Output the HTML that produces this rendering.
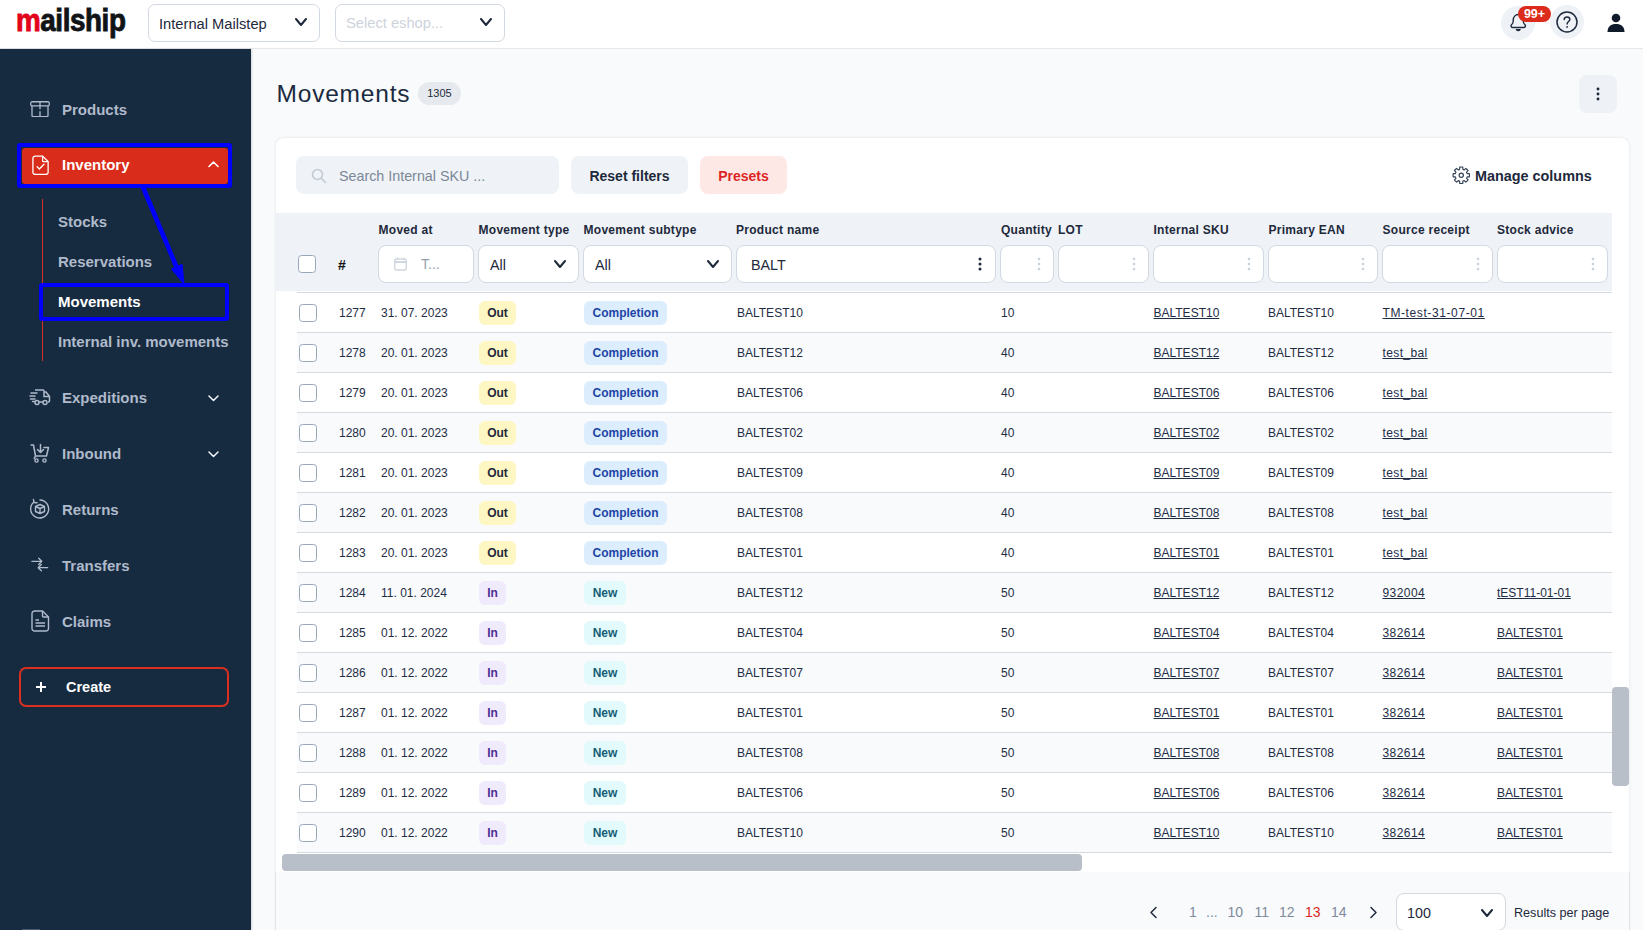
<!DOCTYPE html>
<html><head><meta charset="utf-8"><title>Movements</title>
<style>
*{box-sizing:border-box;margin:0;padding:0}
html,body{width:1643px;height:930px;overflow:hidden;background:#f8fafc;font-family:"Liberation Sans", sans-serif;color:#1e293b}
.a{position:absolute}
.t{position:absolute;white-space:nowrap}
.chk{position:absolute;width:18px;height:18px;border:1.2px solid #98a8ba;border-radius:3.5px;background:#fff}
.inp{position:absolute;height:38px;top:245px;background:#fff;border:1px solid #d3d9e1;border-radius:8px}
.hl{position:absolute;top:221px;font-size:12px;font-weight:bold;letter-spacing:0.28px;line-height:18px;white-space:nowrap;color:#1e293b}
.row{position:absolute;left:297px;width:1315px;height:40px;border-bottom:1px solid #d6dbe2}
.row.g{background:#f8fafc}
.c{position:absolute;top:0;line-height:40px;font-size:12px;white-space:nowrap;color:#1e2d45}
.lk{text-decoration:underline;text-underline-offset:1.2px;color:#1e2d45}
.bd{position:absolute;top:8px;height:24px;line-height:24px;border-radius:6px;font-size:12px;font-weight:bold;text-align:center}
.dots{position:absolute;top:11px;width:4px;height:16px}
.dots i{display:block;width:3px;height:3px;border-radius:50%;background:#cbd2db;margin:0 0 2.5px 0}
.nav{position:absolute;left:0;font-size:15px;font-weight:bold;color:#afbacb;line-height:20px;white-space:nowrap}
</style></head>
<body>
<div class="a" style="left:0;top:0;width:1643px;height:49px;background:#fff;border-bottom:1px solid #e5e7eb"></div><div class="t" style="left:16px;top:0px;font-size:32px;font-weight:bold;line-height:40px;letter-spacing:-0.5px;transform:scaleX(0.87);transform-origin:0 0;-webkit-text-stroke:0.9px currentColor;color:#111417"><span style="color:#e2001a;-webkit-text-stroke-color:#e2001a">m</span>ailship</div><div class="a" style="left:148px;top:4px;width:172px;height:38px;border:1px solid #d3d9e1;border-radius:7px;background:#fff"></div><div class="t" style="left:159px;top:14px;font-size:14.7px;line-height:20px;color:#1e293b">Internal Mailstep</div><svg class="a" style="left:295px;top:18px" width="12" height="9" viewBox="0 0 12 9"><path d="M1 1 L6.0 7 L11 1" fill="none" stroke="#1e293b" stroke-width="2" stroke-linecap="round" stroke-linejoin="round"/></svg><div class="a" style="left:335px;top:4px;width:170px;height:38px;border:1px solid #d3d9e1;border-radius:7px;background:#fff"></div><div class="t" style="left:346px;top:13px;font-size:14.7px;line-height:20px;color:#cdd3db">Select eshop...</div><svg class="a" style="left:480px;top:18px" width="12" height="9" viewBox="0 0 12 9"><path d="M1 1 L6.0 7 L11 1" fill="none" stroke="#1e293b" stroke-width="2" stroke-linecap="round" stroke-linejoin="round"/></svg><div class="a" style="left:1501px;top:6px;width:34px;height:34px;border-radius:50%;background:#eef2f6"></div><svg class="a" style="left:1508px;top:12px" width="20" height="22" viewBox="0 0 20 22"><path d="M4.5 15.5 H16 C17.6 15.5 18 13.2 16.6 12.3 C15.6 11.6 15.3 10.5 15.3 9 V8 C15.3 5 13 2.5 10.25 2.5 C7.5 2.5 5.2 5 5.2 8 V9 C5.2 10.5 4.9 11.6 3.9 12.3 C2.5 13.2 2.9 15.5 4.5 15.5 Z" fill="none" stroke="#1e293b" stroke-width="1.4" stroke-linejoin="round"/><path d="M8.3 17.6 Q10.25 19.8 12.2 17.6 Z" fill="#1e293b" stroke="#1e293b" stroke-width="1.2" stroke-linejoin="round"/></svg><div class="t" style="left:1518px;top:6px;width:33px;height:16px;border-radius:8px;background:#dc2b1c;color:#fff;font-size:12.5px;font-weight:bold;line-height:16px;text-align:center">99+</div><div class="a" style="left:1550px;top:5px;width:34px;height:34px;border-radius:50%;background:#eef2f6"></div><svg class="a" style="left:1556px;top:11px" width="22" height="22" viewBox="0 0 22 22"><circle cx="11" cy="11" r="10" fill="none" stroke="#1e293b" stroke-width="1.5"/><path d="M8.2 8.6 C8.2 6.9 9.5 6 11 6 C12.6 6 13.8 7 13.8 8.5 C13.8 10.4 11.1 10.6 11.1 12.9" fill="none" stroke="#1e293b" stroke-width="1.5" stroke-linecap="round"/><circle cx="11.1" cy="15.9" r="0.9" fill="#1e293b"/></svg><svg class="a" style="left:1606px;top:13px" width="20" height="20" viewBox="0 0 20 20"><circle cx="10" cy="5" r="4.3" fill="#0f1a2a"/><path d="M1.5 19 C1.5 13.5 5 11 10 11 C15 11 18.5 13.5 18.5 19 Z" fill="#0f1a2a"/></svg><div class="a" style="left:0;top:49px;width:251px;height:881px;background:#172b40;box-shadow:1px 0 2px rgba(0,0,0,0.15)"></div><div class="nav" style="left:62px;top:100px">Products</div><svg class="a" style="left:29.5px;top:100.5px" width="20" height="16.5" viewBox="0 0 20 16.5"><rect x="0.75" y="0.75" width="18.5" height="4.2" rx="1.4" fill="none" stroke="#afbacb" stroke-width="1.3"/><path d="M2 4.95 V14.6 a1.1 1.1 0 0 0 1.1 1.1 H16.9 a1.1 1.1 0 0 0 1.1 -1.1 V4.95" fill="none" stroke="#afbacb" stroke-width="1.3"/><path d="M10 0.75 V8.3 M10 10.3 V15.7" stroke="#afbacb" stroke-width="1.3"/></svg><div class="a" style="left:17px;top:143px;width:214.5px;height:45px;border:4.5px solid #0000ff;border-radius:3px"></div><div class="a" style="left:21.5px;top:147.5px;width:206px;height:36px;background:#da2c1b;border-radius:3px"></div><svg class="a" style="left:31.5px;top:154.5px" width="17.5" height="20.5" viewBox="0 0 19 22"><path d="M3 1 H11.5 L17.5 7 V18.5 a2.5 2.5 0 0 1 -2.5 2.5 H3.5 a2.5 2.5 0 0 1 -2.5 -2.5 V3.5 A2.5 2.5 0 0 1 3.5 1 Z" fill="none" stroke="#fff" stroke-width="1.4"/><path d="M11.5 1 V6 a1 1 0 0 0 1 1 H17.5" fill="none" stroke="#fff" stroke-width="1.4"/><path d="M5.5 12.5 L8 15 L13 10" fill="none" stroke="#fff" stroke-width="1.5" stroke-linecap="round" stroke-linejoin="round"/></svg><div class="nav" style="left:62px;top:155px;color:#fff">Inventory</div><svg class="a" style="left:208px;top:160px" width="11" height="8" viewBox="0 0 11 8"><path d="M1 6.5 L5.5 2 L10 6.5" fill="none" stroke="#fff" stroke-width="1.6" stroke-linecap="round" stroke-linejoin="round"/></svg><div class="a" style="left:41.8px;top:199px;width:1.4px;height:162px;background:#d8301f"></div><div class="nav" style="left:58px;top:212px">Stocks</div><div class="nav" style="left:58px;top:252px">Reservations</div><div class="a" style="left:39px;top:283px;width:190px;height:38px;border:4.8px solid #0000ff;border-radius:3px;background:#172b40"></div><div class="nav" style="left:58px;top:292px;color:#fff">Movements</div><div class="nav" style="left:58px;top:332px">Internal inv. movements</div><svg class="a" style="left:0;top:0" width="251" height="330" viewBox="0 0 251 330"><path d="M142.5 186 L176.5 267" stroke="#0000ff" stroke-width="4.6"/><path d="M184 284 L171.5 269 L182 264.3 Z" fill="#0000ff" stroke="#0000ff" stroke-width="1" stroke-linejoin="miter"/></svg><div class="nav" style="left:62px;top:388px">Expeditions</div><svg class="a" style="left:29px;top:388px" width="22" height="18" viewBox="0 0 22 18"><path d="M6 2 H14 a1 1 0 0 1 1 1 V4 H17 L20.5 8.5 V13 a1 1 0 0 1 -1 1 H19" fill="none" stroke="#afbacb" stroke-width="1.5" stroke-linejoin="round"/><path d="M15 4 V8.5 H20.5" fill="none" stroke="#afbacb" stroke-width="1.5"/><path d="M2 5 H8 M1 8 H6 M1.5 11 H6 M3.5 13.5 H6 M10.5 14 H13.5" stroke="#afbacb" stroke-width="1.5" stroke-linecap="round"/><circle cx="8" cy="14.5" r="2" fill="none" stroke="#afbacb" stroke-width="1.5"/><circle cx="16" cy="14.5" r="2" fill="none" stroke="#afbacb" stroke-width="1.5"/></svg><svg class="a" style="left:208px;top:394.5px" width="11" height="7.5" viewBox="0 0 11 7.5"><path d="M1 1 L5.5 5.5 L10 1" fill="none" stroke="#f1f4f8" stroke-width="1.5" stroke-linecap="round" stroke-linejoin="round"/></svg><div class="nav" style="left:62px;top:444px">Inbound</div><svg class="a" style="left:30px;top:443px" width="20" height="20" viewBox="0 0 20 20"><path d="M1 2 H3.5 L5.5 13 H16.5 L18.5 4.5 H14" fill="none" stroke="#afbacb" stroke-width="1.5" stroke-linejoin="round" stroke-linecap="round"/><path d="M10.5 1.5 V9 M7.5 6.5 L10.5 9.5 L13.5 6.5" fill="none" stroke="#afbacb" stroke-width="1.5" stroke-linecap="round" stroke-linejoin="round"/><path d="M5.5 13 L4 16" stroke="#afbacb" stroke-width="1.5"/><circle cx="6.5" cy="17.5" r="1.6" fill="none" stroke="#afbacb" stroke-width="1.4"/><circle cx="14.5" cy="17.5" r="1.6" fill="none" stroke="#afbacb" stroke-width="1.4"/></svg><svg class="a" style="left:208px;top:450.5px" width="11" height="7.5" viewBox="0 0 11 7.5"><path d="M1 1 L5.5 5.5 L10 1" fill="none" stroke="#f1f4f8" stroke-width="1.5" stroke-linecap="round" stroke-linejoin="round"/></svg><div class="nav" style="left:62px;top:500px">Returns</div><svg class="a" style="left:29px;top:498px" width="22" height="22" viewBox="0 0 22 22"><path d="M5 4 A9 9 0 1 0 11 2" fill="none" stroke="#afbacb" stroke-width="1.4" stroke-linecap="round"/><path d="M4.5 1.5 L4.8 4.6 L8 4.8" fill="none" stroke="#afbacb" stroke-width="1.4" stroke-linecap="round" stroke-linejoin="round"/><path d="M11 6.5 L15.5 8.5 V13.5 L11 15.5 L6.5 13.5 V8.5 Z M6.5 8.5 L11 10.5 L15.5 8.5 M11 10.5 V15.5" fill="none" stroke="#afbacb" stroke-width="1.4" stroke-linejoin="round"/></svg><div class="nav" style="left:62px;top:556px">Transfers</div><svg class="a" style="left:30.5px;top:557px" width="18" height="15" viewBox="0 0 20 16"><path d="M1 4.5 H12 M8.5 1 L12 4.5 L8.5 8" fill="none" stroke="#afbacb" stroke-width="1.5" stroke-linecap="round" stroke-linejoin="round"/><path d="M18.5 11.5 H8 M11.5 8 L8 11.5 L11.5 15" fill="none" stroke="#afbacb" stroke-width="1.5" stroke-linecap="round" stroke-linejoin="round"/></svg><div class="nav" style="left:62px;top:612px">Claims</div><svg class="a" style="left:31px;top:610px" width="19" height="22" viewBox="0 0 19 22"><path d="M3 1 H11.5 L17.5 7 V18.5 a2.5 2.5 0 0 1 -2.5 2.5 H3.5 a2.5 2.5 0 0 1 -2.5 -2.5 V3.5 A2.5 2.5 0 0 1 3.5 1 Z" fill="none" stroke="#afbacb" stroke-width="1.4"/><path d="M11.5 1 V6 a1 1 0 0 0 1 1 H17.5" fill="none" stroke="#afbacb" stroke-width="1.4"/><path d="M4.5 10 H8 M4.5 13 H14 M4.5 16 H14" stroke="#afbacb" stroke-width="1.4"/></svg><div class="a" style="left:19px;top:667px;width:210px;height:40px;border:2px solid #dc2f1f;border-radius:7px"></div><svg class="a" style="left:35px;top:681px" width="12" height="12" viewBox="0 0 12 12"><path d="M6 1 V11 M1 6 H11" stroke="#fff" stroke-width="2"/></svg><div class="nav" style="left:66px;top:677px;color:#fff;font-size:14.5px">Create</div><div class="a" style="left:22px;top:929px;width:18px;height:2px;border-radius:1px 1px 0 0;background:#4b5872"></div><div class="t" style="left:276.5px;top:79.3px;font-size:24.5px;letter-spacing:0.8px;line-height:30px;color:#1b2a40">Movements</div><div class="t" style="left:418px;top:82px;width:43px;height:23px;border-radius:12px;background:#e6e9ee;font-size:11px;line-height:23px;text-align:center;color:#1e293b">1305</div><div class="a" style="left:1579px;top:75px;width:38px;height:38px;border-radius:8px;background:#eef2f6"></div><svg class="a" style="left:1595px;top:86px" width="6" height="16" viewBox="0 0 6 16"><circle cx="3" cy="3" r="1.45" fill="#1e293b"/><circle cx="3" cy="8" r="1.45" fill="#1e293b"/><circle cx="3" cy="13" r="1.45" fill="#1e293b"/></svg><div class="a" style="left:276px;top:138px;width:1353px;height:800px;background:#fff;border-radius:8px;box-shadow:0 0 3px rgba(15,23,42,0.11)"></div><div class="a" style="left:276px;top:872px;width:1353px;height:60px;background:#f8fafc;box-shadow:-1px 0 0 rgba(15,23,42,0.06), 1px 0 0 rgba(15,23,42,0.06)"></div><div class="a" style="left:296px;top:156px;width:263px;height:38px;border-radius:8px;background:#eff3f8"></div><svg class="a" style="left:311px;top:168px" width="16" height="16" viewBox="0 0 16 16"><circle cx="6.5" cy="6.5" r="5" fill="none" stroke="#c0c8d2" stroke-width="1.5"/><path d="M10.3 10.3 L14.5 14.5" stroke="#c0c8d2" stroke-width="1.5" stroke-linecap="round"/></svg><div class="t" style="left:339px;top:166px;font-size:14.3px;line-height:20px;color:#7b8796">Search Internal SKU ...</div><div class="t" style="left:571px;top:156px;width:117px;height:38px;border-radius:8px;background:#eff3f8;font-size:14px;font-weight:bold;line-height:40px;text-align:center;color:#1e293b">Reset filters</div><div class="t" style="left:700px;top:156px;width:87px;height:38px;border-radius:8px;background:#fde8e5;font-size:14px;font-weight:bold;line-height:40px;text-align:center;color:#dc2626">Presets</div><svg class="a" style="left:1452px;top:166px" width="18.5" height="18.5" viewBox="0 0 20 20"><path d="M16.38 8.29 L18.74 8.30 A8.9 8.9 0 0 1 18.74 11.70 L16.38 11.71 A6.6 6.6 0 0 1 15.72 13.30 L17.38 14.98 A8.9 8.9 0 0 1 14.98 17.38 L13.30 15.72 A6.6 6.6 0 0 1 11.71 16.38 L11.70 18.74 A8.9 8.9 0 0 1 8.30 18.74 L8.29 16.38 A6.6 6.6 0 0 1 6.70 15.72 L5.02 17.38 A8.9 8.9 0 0 1 2.62 14.98 L4.28 13.30 A6.6 6.6 0 0 1 3.62 11.71 L1.26 11.70 A8.9 8.9 0 0 1 1.26 8.30 L3.62 8.29 A6.6 6.6 0 0 1 4.28 6.70 L2.62 5.02 A8.9 8.9 0 0 1 5.02 2.62 L6.70 4.28 A6.6 6.6 0 0 1 8.29 3.62 L8.30 1.26 A8.9 8.9 0 0 1 11.70 1.26 L11.71 3.62 A6.6 6.6 0 0 1 13.30 4.28 L14.98 2.62 A8.9 8.9 0 0 1 17.38 5.02 L15.72 6.70 A6.6 6.6 0 0 1 16.38 8.29 Z" fill="none" stroke="#334155" stroke-width="1.25" stroke-linejoin="round"/><circle cx="10" cy="10" r="2.3" fill="none" stroke="#334155" stroke-width="1.3"/></svg><div class="t" style="left:1475px;top:166px;font-size:14.4px;font-weight:bold;line-height:20px;color:#1e293b">Manage columns</div><div class="a" style="left:276px;top:213px;width:1336px;height:78px;background:#eff3f8"></div><div class="a" style="left:297px;top:292px;width:1314.5px;height:1px;background:#d3d9e0"></div><div class="chk" style="left:298px;top:255px"></div><div class="t" style="left:338px;top:255px;font-size:14px;font-weight:bold;line-height:20px;color:#111">#</div><div class="hl" style="left:378.5px">Moved at</div><div class="hl" style="left:478.5px">Movement type</div><div class="hl" style="left:583.5px">Movement subtype</div><div class="hl" style="left:736px">Product name</div><div class="hl" style="left:1001px">Quantity</div><div class="hl" style="left:1058px">LOT</div><div class="hl" style="left:1153.5px">Internal SKU</div><div class="hl" style="left:1268.5px">Primary EAN</div><div class="hl" style="left:1382.5px">Source receipt</div><div class="hl" style="left:1497px">Stock advice</div><div class="inp" style="left:378px;width:96px"></div><div class="inp" style="left:478px;width:101px"></div><div class="inp" style="left:583px;width:149px"></div><div class="inp" style="left:736px;width:260px"></div><div class="inp" style="left:1000px;width:54px"></div><div class="inp" style="left:1058px;width:91px"></div><div class="inp" style="left:1153px;width:111px"></div><div class="inp" style="left:1268px;width:110px"></div><div class="inp" style="left:1382px;width:111px"></div><div class="inp" style="left:1497px;width:111px"></div><svg class="a" style="left:394px;top:257px" width="13" height="14" viewBox="0 0 13 14"><rect x="0.75" y="2" width="11.5" height="11" rx="1.5" fill="none" stroke="#cfd6de" stroke-width="1.4"/><path d="M0.75 5 H12.25" stroke="#cfd6de" stroke-width="2"/><path d="M3.5 0.5 V3 M9.5 0.5 V3" stroke="#cfd6de" stroke-width="1.4"/></svg><div class="t" style="left:421px;top:254px;font-size:14px;line-height:20px;color:#94a0ae">T...</div><div class="t" style="left:490px;top:255px;font-size:14.3px;line-height:20px;color:#1e293b">All</div><svg class="a" style="left:553.5px;top:260px" width="12" height="9" viewBox="0 0 12 9"><path d="M1 1 L6.0 7 L11 1" fill="none" stroke="#1e293b" stroke-width="2" stroke-linecap="round" stroke-linejoin="round"/></svg><div class="t" style="left:595px;top:255px;font-size:14.3px;line-height:20px;color:#1e293b">All</div><svg class="a" style="left:706.5px;top:260px" width="12" height="9" viewBox="0 0 12 9"><path d="M1 1 L6.0 7 L11 1" fill="none" stroke="#1e293b" stroke-width="2" stroke-linecap="round" stroke-linejoin="round"/></svg><div class="t" style="left:751px;top:255px;font-size:14.3px;line-height:20px;color:#1e293b">BALT</div><svg class="a" style="left:978px;top:257px" width="4" height="14" viewBox="0 0 4 14"><circle cx="2" cy="2" r="1.5" fill="#1e293b"/><circle cx="2" cy="7" r="1.5" fill="#1e293b"/><circle cx="2" cy="12" r="1.5" fill="#1e293b"/></svg><svg class="a" style="left:1037px;top:257px" width="4" height="14" viewBox="0 0 4 14"><circle cx="2" cy="2" r="1.3" fill="#c9d0d9"/><circle cx="2" cy="7" r="1.3" fill="#c9d0d9"/><circle cx="2" cy="12" r="1.3" fill="#c9d0d9"/></svg><svg class="a" style="left:1132px;top:257px" width="4" height="14" viewBox="0 0 4 14"><circle cx="2" cy="2" r="1.3" fill="#c9d0d9"/><circle cx="2" cy="7" r="1.3" fill="#c9d0d9"/><circle cx="2" cy="12" r="1.3" fill="#c9d0d9"/></svg><svg class="a" style="left:1247px;top:257px" width="4" height="14" viewBox="0 0 4 14"><circle cx="2" cy="2" r="1.3" fill="#c9d0d9"/><circle cx="2" cy="7" r="1.3" fill="#c9d0d9"/><circle cx="2" cy="12" r="1.3" fill="#c9d0d9"/></svg><svg class="a" style="left:1361px;top:257px" width="4" height="14" viewBox="0 0 4 14"><circle cx="2" cy="2" r="1.3" fill="#c9d0d9"/><circle cx="2" cy="7" r="1.3" fill="#c9d0d9"/><circle cx="2" cy="12" r="1.3" fill="#c9d0d9"/></svg><svg class="a" style="left:1476px;top:257px" width="4" height="14" viewBox="0 0 4 14"><circle cx="2" cy="2" r="1.3" fill="#c9d0d9"/><circle cx="2" cy="7" r="1.3" fill="#c9d0d9"/><circle cx="2" cy="12" r="1.3" fill="#c9d0d9"/></svg><svg class="a" style="left:1591px;top:257px" width="4" height="14" viewBox="0 0 4 14"><circle cx="2" cy="2" r="1.3" fill="#c9d0d9"/><circle cx="2" cy="7" r="1.3" fill="#c9d0d9"/><circle cx="2" cy="12" r="1.3" fill="#c9d0d9"/></svg><div class="row" style="top:293px;height:40px"><div class="chk" style="left:2px;top:11px"></div><div class="c" style="left:42px">1277</div><div class="c" style="left:84px">31. 07. 2023</div><div class="bd" style="left:182px;width:37px;background:#fef7c3;color:#1e293b">Out</div><div class="bd" style="left:287px;width:83px;background:#dcedfd;color:#1e45a6">Completion</div><div class="c" style="left:440px">BALTEST10</div><div class="c" style="left:704px">10</div><div class="c lk" style="left:856.5px">BALTEST10</div><div class="c" style="left:971px">BALTEST10</div><div class="c lk" style="left:1085.5px;letter-spacing:0.6px">TM-test-31-07-01</div></div><div class="row g" style="top:333px;height:40px"><div class="chk" style="left:2px;top:11px"></div><div class="c" style="left:42px">1278</div><div class="c" style="left:84px">20. 01. 2023</div><div class="bd" style="left:182px;width:37px;background:#fef7c3;color:#1e293b">Out</div><div class="bd" style="left:287px;width:83px;background:#dcedfd;color:#1e45a6">Completion</div><div class="c" style="left:440px">BALTEST12</div><div class="c" style="left:704px">40</div><div class="c lk" style="left:856.5px">BALTEST12</div><div class="c" style="left:971px">BALTEST12</div><div class="c lk" style="left:1085.5px;letter-spacing:0.38px">test_bal</div></div><div class="row" style="top:373px;height:40px"><div class="chk" style="left:2px;top:11px"></div><div class="c" style="left:42px">1279</div><div class="c" style="left:84px">20. 01. 2023</div><div class="bd" style="left:182px;width:37px;background:#fef7c3;color:#1e293b">Out</div><div class="bd" style="left:287px;width:83px;background:#dcedfd;color:#1e45a6">Completion</div><div class="c" style="left:440px">BALTEST06</div><div class="c" style="left:704px">40</div><div class="c lk" style="left:856.5px">BALTEST06</div><div class="c" style="left:971px">BALTEST06</div><div class="c lk" style="left:1085.5px;letter-spacing:0.38px">test_bal</div></div><div class="row g" style="top:413px;height:40px"><div class="chk" style="left:2px;top:11px"></div><div class="c" style="left:42px">1280</div><div class="c" style="left:84px">20. 01. 2023</div><div class="bd" style="left:182px;width:37px;background:#fef7c3;color:#1e293b">Out</div><div class="bd" style="left:287px;width:83px;background:#dcedfd;color:#1e45a6">Completion</div><div class="c" style="left:440px">BALTEST02</div><div class="c" style="left:704px">40</div><div class="c lk" style="left:856.5px">BALTEST02</div><div class="c" style="left:971px">BALTEST02</div><div class="c lk" style="left:1085.5px;letter-spacing:0.38px">test_bal</div></div><div class="row" style="top:453px;height:40px"><div class="chk" style="left:2px;top:11px"></div><div class="c" style="left:42px">1281</div><div class="c" style="left:84px">20. 01. 2023</div><div class="bd" style="left:182px;width:37px;background:#fef7c3;color:#1e293b">Out</div><div class="bd" style="left:287px;width:83px;background:#dcedfd;color:#1e45a6">Completion</div><div class="c" style="left:440px">BALTEST09</div><div class="c" style="left:704px">40</div><div class="c lk" style="left:856.5px">BALTEST09</div><div class="c" style="left:971px">BALTEST09</div><div class="c lk" style="left:1085.5px;letter-spacing:0.38px">test_bal</div></div><div class="row g" style="top:493px;height:40px"><div class="chk" style="left:2px;top:11px"></div><div class="c" style="left:42px">1282</div><div class="c" style="left:84px">20. 01. 2023</div><div class="bd" style="left:182px;width:37px;background:#fef7c3;color:#1e293b">Out</div><div class="bd" style="left:287px;width:83px;background:#dcedfd;color:#1e45a6">Completion</div><div class="c" style="left:440px">BALTEST08</div><div class="c" style="left:704px">40</div><div class="c lk" style="left:856.5px">BALTEST08</div><div class="c" style="left:971px">BALTEST08</div><div class="c lk" style="left:1085.5px;letter-spacing:0.38px">test_bal</div></div><div class="row" style="top:533px;height:40px"><div class="chk" style="left:2px;top:11px"></div><div class="c" style="left:42px">1283</div><div class="c" style="left:84px">20. 01. 2023</div><div class="bd" style="left:182px;width:37px;background:#fef7c3;color:#1e293b">Out</div><div class="bd" style="left:287px;width:83px;background:#dcedfd;color:#1e45a6">Completion</div><div class="c" style="left:440px">BALTEST01</div><div class="c" style="left:704px">40</div><div class="c lk" style="left:856.5px">BALTEST01</div><div class="c" style="left:971px">BALTEST01</div><div class="c lk" style="left:1085.5px;letter-spacing:0.38px">test_bal</div></div><div class="row g" style="top:573px;height:40px"><div class="chk" style="left:2px;top:11px"></div><div class="c" style="left:42px">1284</div><div class="c" style="left:84px">11. 01. 2024</div><div class="bd" style="left:182px;width:27px;background:#efebfd;color:#4f2d94">In</div><div class="bd" style="left:287px;width:42px;background:#e3fafd;color:#155e75">New</div><div class="c" style="left:440px">BALTEST12</div><div class="c" style="left:704px">50</div><div class="c lk" style="left:856.5px">BALTEST12</div><div class="c" style="left:971px">BALTEST12</div><div class="c lk" style="left:1085.5px;letter-spacing:0.42px">932004</div><div class="c lk" style="left:1200px">tEST11-01-01</div></div><div class="row" style="top:613px;height:40px"><div class="chk" style="left:2px;top:11px"></div><div class="c" style="left:42px">1285</div><div class="c" style="left:84px">01. 12. 2022</div><div class="bd" style="left:182px;width:27px;background:#efebfd;color:#4f2d94">In</div><div class="bd" style="left:287px;width:42px;background:#e3fafd;color:#155e75">New</div><div class="c" style="left:440px">BALTEST04</div><div class="c" style="left:704px">50</div><div class="c lk" style="left:856.5px">BALTEST04</div><div class="c" style="left:971px">BALTEST04</div><div class="c lk" style="left:1085.5px;letter-spacing:0.42px">382614</div><div class="c lk" style="left:1200px">BALTEST01</div></div><div class="row g" style="top:653px;height:40px"><div class="chk" style="left:2px;top:11px"></div><div class="c" style="left:42px">1286</div><div class="c" style="left:84px">01. 12. 2022</div><div class="bd" style="left:182px;width:27px;background:#efebfd;color:#4f2d94">In</div><div class="bd" style="left:287px;width:42px;background:#e3fafd;color:#155e75">New</div><div class="c" style="left:440px">BALTEST07</div><div class="c" style="left:704px">50</div><div class="c lk" style="left:856.5px">BALTEST07</div><div class="c" style="left:971px">BALTEST07</div><div class="c lk" style="left:1085.5px;letter-spacing:0.42px">382614</div><div class="c lk" style="left:1200px">BALTEST01</div></div><div class="row" style="top:693px;height:40px"><div class="chk" style="left:2px;top:11px"></div><div class="c" style="left:42px">1287</div><div class="c" style="left:84px">01. 12. 2022</div><div class="bd" style="left:182px;width:27px;background:#efebfd;color:#4f2d94">In</div><div class="bd" style="left:287px;width:42px;background:#e3fafd;color:#155e75">New</div><div class="c" style="left:440px">BALTEST01</div><div class="c" style="left:704px">50</div><div class="c lk" style="left:856.5px">BALTEST01</div><div class="c" style="left:971px">BALTEST01</div><div class="c lk" style="left:1085.5px;letter-spacing:0.42px">382614</div><div class="c lk" style="left:1200px">BALTEST01</div></div><div class="row g" style="top:733px;height:40px"><div class="chk" style="left:2px;top:11px"></div><div class="c" style="left:42px">1288</div><div class="c" style="left:84px">01. 12. 2022</div><div class="bd" style="left:182px;width:27px;background:#efebfd;color:#4f2d94">In</div><div class="bd" style="left:287px;width:42px;background:#e3fafd;color:#155e75">New</div><div class="c" style="left:440px">BALTEST08</div><div class="c" style="left:704px">50</div><div class="c lk" style="left:856.5px">BALTEST08</div><div class="c" style="left:971px">BALTEST08</div><div class="c lk" style="left:1085.5px;letter-spacing:0.42px">382614</div><div class="c lk" style="left:1200px">BALTEST01</div></div><div class="row" style="top:773px;height:40px"><div class="chk" style="left:2px;top:11px"></div><div class="c" style="left:42px">1289</div><div class="c" style="left:84px">01. 12. 2022</div><div class="bd" style="left:182px;width:27px;background:#efebfd;color:#4f2d94">In</div><div class="bd" style="left:287px;width:42px;background:#e3fafd;color:#155e75">New</div><div class="c" style="left:440px">BALTEST06</div><div class="c" style="left:704px">50</div><div class="c lk" style="left:856.5px">BALTEST06</div><div class="c" style="left:971px">BALTEST06</div><div class="c lk" style="left:1085.5px;letter-spacing:0.42px">382614</div><div class="c lk" style="left:1200px">BALTEST01</div></div><div class="row g" style="top:813px;height:40px"><div class="chk" style="left:2px;top:11px"></div><div class="c" style="left:42px">1290</div><div class="c" style="left:84px">01. 12. 2022</div><div class="bd" style="left:182px;width:27px;background:#efebfd;color:#4f2d94">In</div><div class="bd" style="left:287px;width:42px;background:#e3fafd;color:#155e75">New</div><div class="c" style="left:440px">BALTEST10</div><div class="c" style="left:704px">50</div><div class="c lk" style="left:856.5px">BALTEST10</div><div class="c" style="left:971px">BALTEST10</div><div class="c lk" style="left:1085.5px;letter-spacing:0.42px">382614</div><div class="c lk" style="left:1200px">BALTEST01</div></div><div class="a" style="left:282px;top:854px;width:800px;height:17px;border-radius:4px;background:#b8bfc9"></div><div class="a" style="left:1612px;top:687px;width:17px;height:99px;border-radius:4px;background:#b8bfc9"></div><svg class="a" style="left:1149px;top:906px" width="9" height="13" viewBox="0 0 9 13"><path d="M7 1.5 L2 6.5 L7 11.5" fill="none" stroke="#1e293b" stroke-width="1.5" stroke-linecap="round" stroke-linejoin="round"/></svg><svg class="a" style="left:1369px;top:906px" width="9" height="13" viewBox="0 0 9 13"><path d="M2 1.5 L7 6.5 L2 11.5" fill="none" stroke="#1e293b" stroke-width="1.5" stroke-linecap="round" stroke-linejoin="round"/></svg><div class="t" style="left:1189px;top:902px;font-size:14px;line-height:20px;color:#7f8b9b">1</div><div class="t" style="left:1206px;top:902px;font-size:14px;line-height:20px;color:#7f8b9b">...</div><div class="t" style="left:1227.5px;top:902px;font-size:14px;line-height:20px;color:#7f8b9b">10</div><div class="t" style="left:1254.5px;top:902px;font-size:14px;line-height:20px;color:#7f8b9b">11</div><div class="t" style="left:1279px;top:902px;font-size:14px;line-height:20px;color:#7f8b9b">12</div><div class="t" style="left:1331px;top:902px;font-size:14px;line-height:20px;color:#7f8b9b">14</div><div class="t" style="left:1305px;top:902px;font-size:14px;line-height:20px;color:#dc2626">13</div><div class="a" style="left:1396px;top:893px;width:110px;height:38px;border:1px solid #d3d9e1;border-radius:8px;background:#fff"></div><div class="t" style="left:1407px;top:903px;font-size:14.3px;line-height:20px;color:#1e293b">100</div><svg class="a" style="left:1481px;top:909px" width="12" height="9" viewBox="0 0 12 9"><path d="M1 1 L6.0 7 L11 1" fill="none" stroke="#1e293b" stroke-width="2" stroke-linecap="round" stroke-linejoin="round"/></svg><div class="t" style="left:1514px;top:903px;font-size:12.6px;line-height:20px;color:#1e293b">Results per page</div>
</body></html>
